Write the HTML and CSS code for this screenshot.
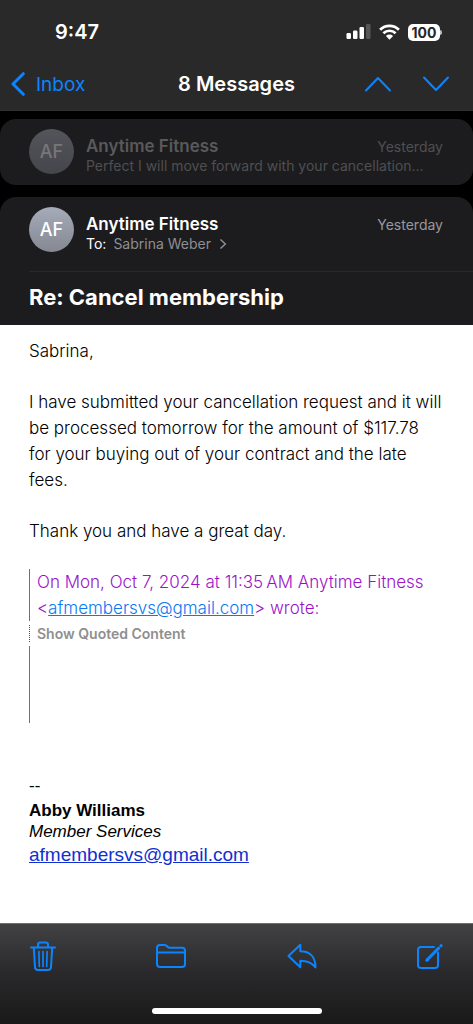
FILE: index.html
```html
<!DOCTYPE html>
<html lang="en">
<head>
<meta charset="utf-8">
<meta name="viewport" content="width=device-width, initial-scale=1">
<title>Re: Cancel membership</title>
<link rel="stylesheet" href="styles.css">
</head>
<body>
<header class="top">
  <div class="status">
    <time class="clock">9:47</time>
    <div class="indicators">
      <svg width="25" height="16" viewBox="0 0 25 16" aria-label="Signal"><g fill="#fff"><rect x="0.5" y="9" width="4.5" height="6" rx="1.2"/><rect x="7" y="6.500" width="4.500" height="8.500" rx="1.2"/><rect x="13.500" y="3" width="4.500" height="12" rx="1.2"/><rect x="20" y="0" width="4.500" height="15" rx="1.2" fill="#565658"/></g></svg>
      <svg width="21" height="16" viewBox="0 0 21 16" aria-label="Wi-Fi"><g fill="none" stroke="#fff" stroke-width="2.7"><path d="M1.100 5.800a13.300 13.300 0 0 1 18.800 0"/><path d="M4.400 9.300a8.600 8.600 0 0 1 12.200 0"/></g><path fill="#fff" d="M10.500 15.700 6.900 12.100a5.100 5.100 0 0 1 7.200 0z"/></svg>
      <span class="battery">100</span>
    </div>
  </div>
  <nav class="nav">
    <a class="back" href="#inbox"><svg width="14" height="24" viewBox="0 0 14 24"><path d="M12.300 1.700 2 12l10.300 10.300"/></svg>Inbox</a>
    <h1 class="title">8 Messages</h1>
    <div class="arrows">
      <button type="button" aria-label="Previous message"><svg width="28" height="16" viewBox="0 0 28 16"><path d="M2 14.500 14 2l12 12.500"/></svg></button>
      <button type="button" aria-label="Next message"><svg width="28" height="16" viewBox="0 0 28 16"><path d="M2 1.500 14 14 26 1.500"/></svg></button>
    </div>
  </nav>
</header>
<main class="thread">
  <article class="card faded">
    <div class="sender">
      <span class="avatar">AF</span>
      <div class="who">
        <div class="line"><h2 class="name">Anytime Fitness</h2><time class="date">Yesterday</time></div>
        <p class="sub">Perfect I will move forward with your cancellation...</p>
      </div>
    </div>
  </article>
  <article class="card open">
    <div class="sender">
      <span class="avatar">AF</span>
      <div class="who">
        <div class="line"><h2 class="name">Anytime Fitness</h2><time class="date">Yesterday</time></div>
        <p class="sub"><span class="to">To:</span><a class="recipient" href="#sabrina">Sabrina Weber</a><svg width="8" height="12" viewBox="0 0 8 12"><path d="M1.500 1.500 6.300 6l-4.800 4.500"/></svg></p>
      </div>
    </div>
    <h2 class="subject">Re: Cancel membership</h2>
    <div class="message">
      <p>Sabrina,</p>
      <p>I have submitted your cancellation request and it will be processed tomorrow for the amount of $117.78 for your buying out of your contract and the late fees.</p>
      <p>Thank you and have a great day.</p>
      <div class="quote">
        <blockquote class="bar">On Mon, Oct 7, 2024 at 11:35&#8239;AM Anytime Fitness &lt;<a href="mailto:afmembersvs@gmail.com">afmembersvs@gmail.com</a>&gt; wrote:</blockquote>
        <button class="show" type="button">Show Quoted Content</button>
        <div class="bar rest"></div>
      </div>
      <footer class="signature">
        <div>--</div>
        <strong>Abby Williams</strong>
        <em>Member Services</em>
        <a href="mailto:afmembersvs@gmail.com">afmembersvs@gmail.com</a>
      </footer>
    </div>
  </article>
</main>
<footer class="toolbar">
  <div class="actions">
    <button type="button" aria-label="Delete"><svg width="26" height="32" viewBox="0 0 26 32"><path d="M1 7.500h24M8 7V4.500q0-2 2-2h6q2 0 2 2V7M3.800 8l1.200 19q.2 3 3 3h10q2.800 0 3-3L22.200 8"/><path class="thin" d="M8.900 11.500l.4 15M13 11.500v15M17.100 11.500l-.4 15"/></svg></button>
    <button type="button" aria-label="Move to folder"><svg width="32" height="26" viewBox="0 0 32 26"><path d="M2 21V5q0-3 3-3h4.500q1.200 0 2 .8l1 1q.9.900 2.200.9H27q3 0 3 3V21q0 3-3 3H5q-3 0-3-3zM2 9.500h28"/></svg></button>
    <button type="button" aria-label="Reply"><svg width="30" height="26" viewBox="0 0 30 26"><path d="M1.500 13 13.300 1.800V8.300C23 8.300 28.500 14 28.500 24.500 24.500 19 20 17.700 13.300 17.700V24.200z"/></svg></button>
    <button type="button" aria-label="Compose"><svg width="27" height="27" viewBox="0 0 27 27"><path d="M18 4H5Q2 4 2 7v15q0 3 3 3h14q3 0 3-3V9.500"/><path class="pencil" d="M11.500 16.500 22.700 5.100"/><path d="m10.300 17.800.6-1.800 1.200 1.200z"/><path class="pencil" d="m25 2.700.1-.1"/></svg></button>
  </div>
  <div class="home"></div>
</footer>
</body>
</html>
```
FILE: styles.css
```css
* { box-sizing: border-box; }
body {
  margin: 0;
  min-height: 100vh;
  display: flex;
  flex-direction: column;
  background: #000;
  color: #fff;
  font-family: Inter, "Liberation Sans", sans-serif;
  font-size: 16px;
}
h1, h2, p, blockquote { margin: 0; }
button { padding: 0; border: 0; background: none; font: inherit; color: inherit; }
svg { display: block; flex: none; }

.top { background: #29292a; border-bottom: 1px solid #303031; padding: 16px 16px 10px 11px; }
.status { display: flex; justify-content: space-between; align-items: center; height: 32px; padding: 0 17px 0 44px; }
.clock { font-size: 20px; font-weight: 600; }
.indicators { display: flex; align-items: center; gap: 8px; }
.battery {
  position: relative;
  width: 32px;
  height: 17px;
  border-radius: 5px;
  background: #fff;
  color: #262627;
  font-size: 14px;
  font-weight: 700;
  line-height: 17px;
  text-align: center;
}
.battery::after { content: ""; position: absolute; right: -2px; top: 6px; width: 2px; height: 5px; border-radius: 0 2px 2px 0; background: #bbb; }
.nav { display: grid; grid-template-columns: 1fr auto 1fr; align-items: center; margin-top: 20px; height: 32px; }
.nav svg, .actions svg { fill: none; stroke: #0b84ff; stroke-linecap: round; stroke-linejoin: round; }
.nav svg { stroke-width: 2; }
.nav .back svg { stroke-width: 3; }
.back { display: flex; align-items: center; gap: 11px; color: #0b84ff; font-size: 19px; text-decoration: none; }
.title { padding-left: 5px; font-size: 20px; font-weight: 600; }
.arrows { display: flex; justify-content: flex-end; gap: 30px; padding-right: 7px; }

.thread { flex: 1; display: flex; flex-direction: column; gap: 12px; padding-top: 8px; }
.card { border-radius: 16px; background: #1c1c1e; }
.sender { display: flex; align-items: center; gap: 12px; padding: 10px 30px 11px 29px; }
.avatar {
  flex: none;
  width: 45px;
  height: 45px;
  border-radius: 50%;
  background: linear-gradient(#a5abb9, #858892);
  font-size: 18px;
  font-weight: 500;
  line-height: 45px;
  text-align: center;
}
.who { flex: 1; min-width: 0; padding-top: 6px; }
.line { display: flex; justify-content: space-between; align-items: center; }
.name { font-size: 17px; font-weight: 600; line-height: 20px; }
.date { color: #98989e; font-size: 14px; line-height: 20px; padding-top: 2px; }
.sub { display: flex; align-items: center; font-size: 14px; line-height: 17px; white-space: nowrap; }
.to { margin-right: 7px; }
.recipient { color: #8e8e93; text-decoration: none; }
.sub svg { margin-left: 8px; fill: none; stroke: #8e8e93; stroke-width: 1.5px; }
.faded .name { color: #59595b; }
.faded .sub, .faded .date { color: #4f4f51; }
.faded .avatar { background: linear-gradient(#53555a, #45464b); color: #77777a; }
.open { flex: 1; display: flex; flex-direction: column; border-radius: 16px 16px 0 0; }
.subject { margin-left: 29px; padding: 10px 0 13px; border-top: 1px solid #29292b; font-size: 22px; font-weight: 700; line-height: 30px; }
.open .sender { padding-bottom: 19px; }

.message {
  flex: 1;
  display: flex;
  flex-direction: column;
  gap: 25px;
  padding: 13px 29px 24px;
  background: #fff;
  color: #000;
  font-size: 17px;
  font-weight: 300;
  line-height: 26px;
}
.quote { display: flex; flex-direction: column; gap: 4px; color: #9b12c9; }
.bar { padding-left: 7px; border-left: 1px solid #a840e0; }
.bar a { color: #0b78f5; }
.rest { height: 77px; }
.show { padding-left: 7px; border-left: 1px dotted #4a35c4; color: #8f8f8f; font-size: 14px; font-weight: 600; line-height: 17px; text-align: left; }
.signature { display: flex; flex-direction: column; align-items: flex-start; margin-top: 25px; font-family: "Liberation Sans", Arial, sans-serif; font-weight: 400; line-height: 23px; }
.signature div { line-height: 26px; }
.signature em { line-height: 20px; }
.signature a { color: #1030d0; font-size: 19px; line-height: 26px; }

.toolbar { background: linear-gradient(#424243, #29292b 50%, #191919); border-top: 1px solid #707070; padding: 14px 30px 10px; }
.actions { display: flex; justify-content: space-between; align-items: center; height: 36px; }
.actions svg { stroke-width: 2; }
.actions .thin { stroke-width: 1.7px; }
.actions .pencil { stroke-width: 3; }
.home { width: 170px; height: 6px; margin: 34px auto 0; border-radius: 3px; background: #fff; }
```
